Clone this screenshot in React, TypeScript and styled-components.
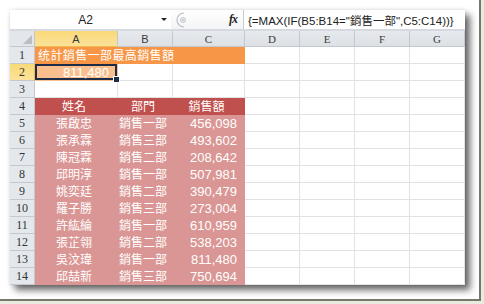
import { createGlobalStyle, styled } from "styled-components";

const GlobalStyle = createGlobalStyle`
  html, body {
    margin: 0;
    padding: 0;
    background: #e9ebdf;
  }
  body {
    width: 484px;
    height: 304px;
    overflow: hidden;
    font-family: "Liberation Sans", "Noto Sans CJK TC", sans-serif;
  }
`;

const Frame = styled.div`
  width: 481px;
  height: 301px;
  background: #ffffff;
  border-right: 2px solid #77786c;
  border-bottom: 2px solid #77786c;
  padding: 10px 0 0 10px;
  box-sizing: border-box;
`;

const Window = styled.div`
  width: 455px;
  height: 275px;
  background: #ffffff;
  display: flex;
  flex-direction: column;
  box-shadow: 5px 5px 7px rgba(0, 0, 0, 0.6), 0 0 4px rgba(0, 0, 0, 0.12);
  overflow: hidden;
`;

const FormulaBar = styled.div`
  height: 19px;
  display: flex;
  background: #ffffff;
`;

const NameBox = styled.div`
  width: 161px;
  position: relative;
  display: flex;
  align-items: center;
  justify-content: center;
  font-size: 12px;
  color: #222;
  padding-right: 10px;
  box-sizing: border-box;
`;

const DropArrow = styled.span`
  position: absolute;
  right: 4px;
  top: 8px;
  width: 0;
  height: 0;
  border-left: 3px solid transparent;
  border-right: 3px solid transparent;
  border-top: 3px solid #222;
`;

const ToolArea = styled.div`
  width: 72px;
  display: flex;
  align-items: center;
  justify-content: space-between;
  padding: 0 6px 0 4px;
  box-sizing: border-box;
  background: linear-gradient(#ffffff, #f3f4f6);
`;

const Fx = styled.span`
  font-family: "Liberation Serif", serif;
  font-style: italic;
  font-weight: bold;
  font-size: 12px;
  color: #222;
  letter-spacing: -1px;
`;

const FormulaInput = styled.div`
  flex: 1;
  display: flex;
  align-items: center;
  padding-left: 4px;
  font-size: 11.5px;
  color: #222;
  border-left: 1px solid #c9ccd1;
  white-space: nowrap;
`;

const Divider = styled.div`
  height: 2px;
  background: #d6dae0;
`;

const Sheet = styled.div`
  display: grid;
  grid-template-columns: 25px 83px 55px 72px 55px 55px 55px 55px;
  grid-template-rows: 16px repeat(14, 17px);
`;

const Corner = styled.div`
  background: #e3e6ea;
  border-right: 1px solid #c4c9d0;
  border-bottom: 1px solid #c4c9d0;
  box-sizing: border-box;
  position: relative;
  &::after {
    content: "";
    position: absolute;
    right: 2px;
    bottom: 2px;
    border-left: 9px solid transparent;
    border-bottom: 9px solid #b8bec6;
  }
`;

const ColHead = styled.div<{ $active?: boolean; $serif?: boolean }>`
  display: flex;
  align-items: center;
  justify-content: center;
  font-family: ${(p) =>
    p.$serif ? '"Liberation Serif", serif' : '"Liberation Sans", sans-serif'};
  font-size: 11px;
  color: #3b3b3b;
  background: ${(p) =>
    p.$active ? "linear-gradient(#f9d977, #fbe29a)" : "linear-gradient(#e6e9ed, #dde1e6)"};
  border-right: 1px solid #c4c9d0;
  border-bottom: 1px solid ${(p) => (p.$active ? "#f2b94b" : "#c4c9d0")};
  box-sizing: border-box;
`;

const RowHead = styled.div<{ $active?: boolean }>`
  display: flex;
  align-items: center;
  justify-content: center;
  font-family: "Liberation Serif", serif;
  font-size: 12px;
  color: #333;
  background: ${(p) => (p.$active ? "linear-gradient(#f9d977, #fbe29a)" : "#e4e8ed")};
  border-right: 1px solid ${(p) => (p.$active ? "#f2b94b" : "#c4c9d0")};
  border-bottom: 1px solid #c4c9d0;
  box-sizing: border-box;
`;

const Cell = styled.div<{
  $bg?: string;
  $align?: "left" | "center" | "right";
  $span?: number;
}>`
  display: flex;
  align-items: center;
  justify-content: ${(p) =>
    p.$align === "right" ? "flex-end" : p.$align === "center" ? "center" : "flex-start"};
  padding: 0 7px 0 3px;
  grid-column: ${(p) => (p.$span ? `span ${p.$span}` : "auto")};
  background: ${(p) => p.$bg ?? "#ffffff"};
  border-right: 1px solid ${(p) => p.$bg ?? "#e2e2e2"};
  border-bottom: 1px solid ${(p) => p.$bg ?? "#e2e2e2"};
  box-sizing: border-box;
  color: #ffffff;
  font-size: 12px;
  white-space: nowrap;
  overflow: visible;
`;

const CjkText = styled.span<{ $wide?: boolean }>`
  font-family: "Noto Sans CJK TC", sans-serif;
  font-size: 12px;
  line-height: 1;
  letter-spacing: ${(p) => (p.$wide ? "0.4px" : "0")};
`;

const NumText = styled.span`
  font-family: "Liberation Sans", sans-serif;
  font-size: 13px;
  line-height: 1;
`;

const Selected = styled(Cell)`
  position: relative;
  box-shadow: inset 0 0 0 2px #1d2c47;
  padding-right: 8px;
`;

const FillHandle = styled.span`
  position: absolute;
  right: -3px;
  bottom: -3px;
  width: 5px;
  height: 5px;
  background: #1d2c47;
  border: 1px solid #ffffff;
  z-index: 2;
`;

const columns = ["A", "B", "C", "D", "E", "F", "G"];

const rows: [string, string, string][] = [
  ["張啟忠", "銷售一部", "456,098"],
  ["張承霖", "銷售三部", "493,602"],
  ["陳冠霖", "銷售二部", "208,642"],
  ["邱明淳", "銷售一部", "507,981"],
  ["姚奕廷", "銷售二部", "390,479"],
  ["羅子勝", "銷售三部", "273,004"],
  ["許紘綸", "銷售一部", "610,959"],
  ["張芷翎", "銷售二部", "538,203"],
  ["吳汶瑋", "銷售一部", "811,480"],
  ["邱喆新", "銷售三部", "750,694"],
];

const ORANGE = "#f79646";
const LIGHT_ORANGE = "#fabf8f";
const DARK_RED = "#c0504d";
const PINK = "#da9694";

function Blank({ count }: { count: number }) {
  return (
    <>
      {Array.from({ length: count }, (_, i) => (
        <Cell key={i} />
      ))}
    </>
  );
}

function Row({
  index,
  name,
  dept,
  amount,
}: {
  index: number;
  name: string;
  dept: string;
  amount: string;
}) {
  return (
    <>
      <RowHead>{index}</RowHead>
      <Cell $bg={PINK} $align="center">
        <CjkText>{name}</CjkText>
      </Cell>
      <Cell $bg={PINK} $align="center">
        <CjkText>{dept}</CjkText>
      </Cell>
      <Cell $bg={PINK} $align="right">
        <NumText>{amount}</NumText>
      </Cell>
      <Blank count={4} />
    </>
  );
}

export default function App() {
  return (
    <>
      <GlobalStyle />
      <Frame>
        <Window>
          <FormulaBar>
            <NameBox>
              A2
              <DropArrow />
            </NameBox>
            <ToolArea>
              <svg width="12" height="16" viewBox="0 0 12 16">
                <path d="M9 1 A7 7 0 0 0 9 15" fill="none" stroke="#b9bec5" strokeWidth="1.2" />
                <circle cx="8" cy="8" r="2.5" fill="#eef0f3" stroke="#b9bec5" strokeWidth="0.8" />
                <line x1="6.8" y1="8" x2="9.2" y2="8" stroke="#9aa1aa" strokeWidth="0.8" />
              </svg>
              <Fx>fx</Fx>
            </ToolArea>
            <FormulaInput>{'{=MAX(IF(B5:B14="銷售一部",C5:C14))}'}</FormulaInput>
          </FormulaBar>
          <Divider />
          <Sheet>
            <Corner />
            {columns.map((c, i) => (
              <ColHead key={c} $active={i === 0} $serif={i > 1}>
                {c}
              </ColHead>
            ))}

            <RowHead>1</RowHead>
            <Cell $bg={ORANGE} $span={3}>
              <CjkText $wide>统計銷售一部最高銷售額</CjkText>
            </Cell>
            <Blank count={4} />

            <RowHead $active>2</RowHead>
            <Selected $bg={LIGHT_ORANGE} $align="right">
              <NumText>811,480</NumText>
              <FillHandle />
            </Selected>
            <Blank count={6} />

            <RowHead>3</RowHead>
            <Blank count={7} />

            <RowHead>4</RowHead>
            <Cell $bg={DARK_RED} $align="center">
              <CjkText>姓名</CjkText>
            </Cell>
            <Cell $bg={DARK_RED} $align="center">
              <CjkText>部門</CjkText>
            </Cell>
            <Cell $bg={DARK_RED} $align="center">
              <CjkText>銷售額</CjkText>
            </Cell>
            <Blank count={4} />

            {rows.map(([name, dept, amount], i) => (
              <Row key={name} index={i + 5} name={name} dept={dept} amount={amount} />
            ))}
          </Sheet>
        </Window>
      </Frame>
    </>
  );
}
